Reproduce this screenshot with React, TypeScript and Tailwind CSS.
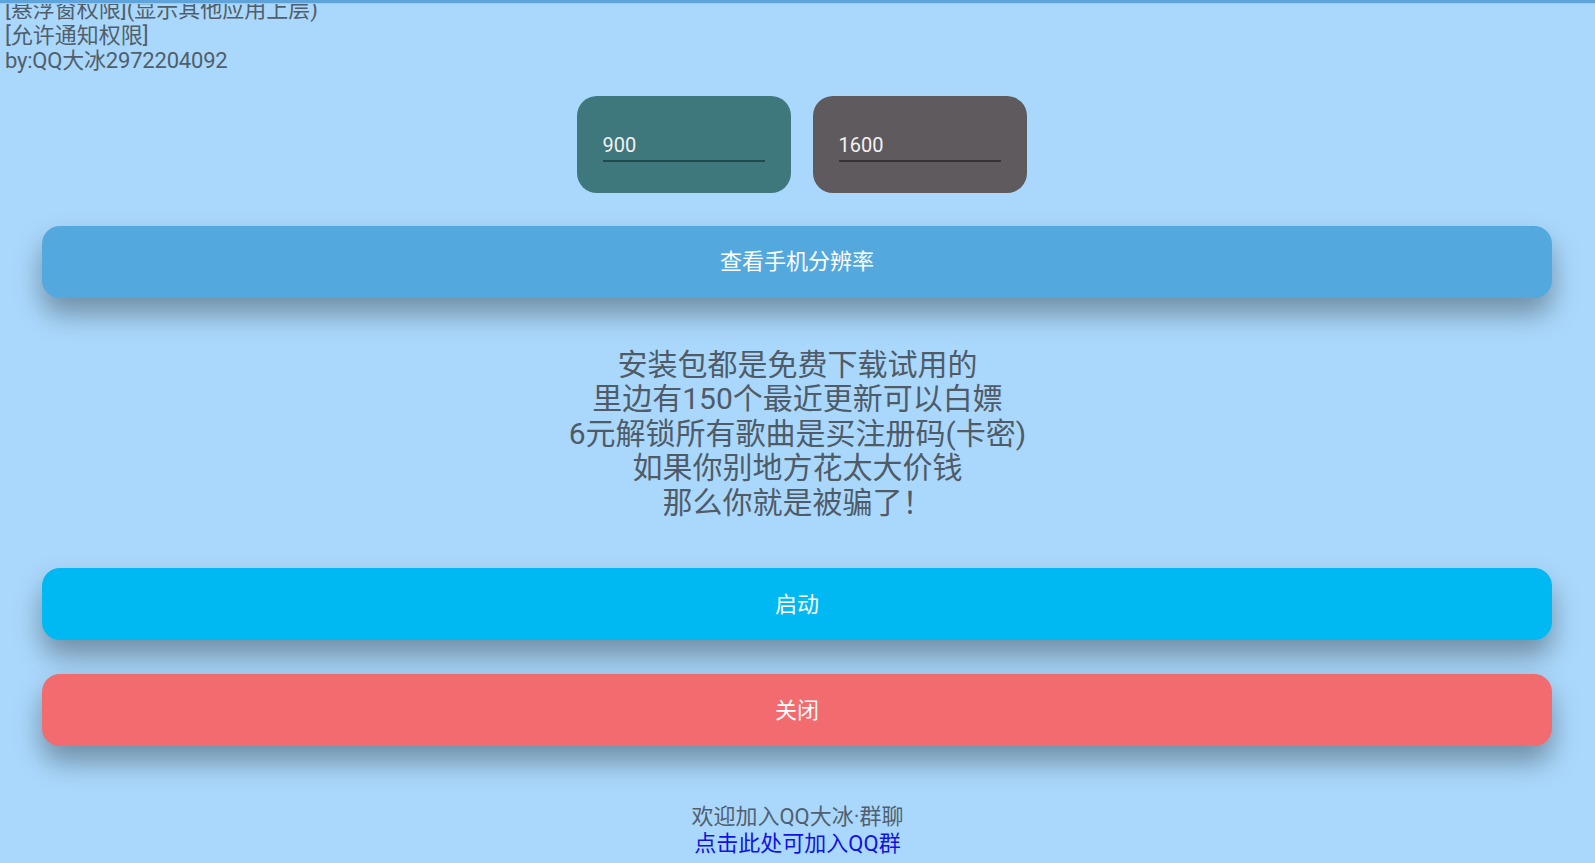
import React from "react";

export default function App() {
  return (
    <div className="relative min-h-screen overflow-hidden bg-[#aad8fc] font-[Roboto,'Noto_Sans_CJK_SC',sans-serif]">
      <div className="absolute left-0 right-0 top-0 z-10 h-[4px] border-b border-[#8fcff6] bg-[#5ea3da]" />

      <div className="-mt-[3px] pl-[5px] text-[22px] leading-[25.5px] text-[#515e6b]">
        <div>[悬浮窗权限](显示其他应用上层)</div>
        <div>[允许通知权限]</div>
        <div className="tracking-[-0.2px]">by:QQ大冰2972204092</div>
      </div>

      <div className="mt-[22px] flex justify-center gap-[22px] pl-[8px]">
        <div className="h-[97px] w-[214px] rounded-[20px] bg-[#3e787c] px-[26px] pt-[37px]">
          <div className="border-b-2 border-[#1f4a50] pb-[3px] text-[20px] leading-[24px] text-[#f2f2f2]">900</div>
        </div>
        <div className="h-[97px] w-[214px] rounded-[20px] bg-[#5f5a5d] px-[26px] pt-[37px]">
          <div className="border-b-2 border-[#373233] pb-[3px] text-[20px] leading-[24px] text-[#f2f2f2]">1600</div>
        </div>
      </div>

      <div className="ml-[42px] mr-[43px] mt-[33px] flex h-[72px] items-center justify-center rounded-[18px] bg-[#53a8de] text-[22px] text-white shadow-[0_16px_28px_rgba(0,0,0,0.34)]">
        查看手机分辨率
      </div>

      <div className="mt-[50px] text-center text-[30px] leading-[34.5px] text-[#4f5b67]">
        <div>安装包都是免费下载试用的</div>
        <div>里边有150个最近更新可以白嫖</div>
        <div>6元解锁所有歌曲是买注册码(卡密)</div>
        <div>如果你别地方花太大价钱</div>
        <div>那么你就是被骗了！</div>
      </div>

      <div className="ml-[42px] mr-[43px] mt-[48px] flex h-[72px] items-center justify-center rounded-[18px] bg-[#00b9f2] text-[22px] text-white shadow-[0_16px_28px_rgba(0,0,0,0.34)]">
        启动
      </div>

      <div className="ml-[42px] mr-[43px] mt-[34px] flex h-[72px] items-center justify-center rounded-[18px] bg-[#f26b6e] text-[22px] text-white shadow-[0_16px_28px_rgba(0,0,0,0.34)]">
        关闭
      </div>

      <div className="mt-[58px] text-center text-[22px] leading-[26.5px]">
        <div className="text-[#516070]">欢迎加入QQ大冰·群聊</div>
        <div className="text-[#1212e2]">点击此处可加入QQ群</div>
      </div>
    </div>
  );
}
